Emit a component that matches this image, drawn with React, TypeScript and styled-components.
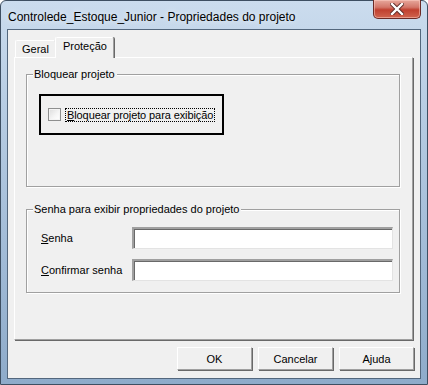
import React from "react";
import styled, { createGlobalStyle } from "styled-components";

const GlobalStyle = createGlobalStyle`
  html, body { margin: 0; padding: 0; background: #ffffff; }
  body { font-family: "Liberation Sans", Arial, sans-serif; }
`;

const Window = styled.div`
  width: 428px;
  height: 385px;
  box-sizing: border-box;
  border: 1px solid #3e4f62;
  border-radius: 6px 6px 0 0;
  background: linear-gradient(180deg, #cbdcee 0%, #b9cee4 25%, #9fb9d5 70%, #8eabca 100%);
  display: flex;
  flex-direction: column;
  padding: 0 6px 5px 6px;
`;

const TitleBar = styled.div`
  height: 28px;
  display: flex;
  align-items: flex-start;
  justify-content: space-between;
`;

const Title = styled.div`
  font-family: "Liberation Sans", Arial, sans-serif;
  font-size: 12px;
  color: #000;
  padding: 9px 0 0 1px;
  text-shadow: 0 0 6px rgba(255, 255, 255, 0.9);
`;

const CloseButton = styled.div`
  width: 48px;
  height: 19px;
  margin-right: 0;
  margin-top: -1px;
  box-sizing: border-box;
  border: 1px solid #6b2a26;
  border-top: none;
  border-radius: 0 0 5px 5px;
  background: linear-gradient(180deg, #e7a89c 0%, #d3776a 40%, #c0402f 55%, #d0644f 100%);
  box-shadow: inset 0 0 0 1px rgba(255, 210, 200, 0.5);
  display: flex;
  align-items: center;
  justify-content: center;
`;

const Client = styled.div`
  flex: 1;
  box-sizing: border-box;
  border: 1px solid #53677d;
  background: #f0f0f0;
  display: flex;
  flex-direction: column;
  padding: 7px 7px 0 6px;
`;

const TabRow = styled.div`
  display: flex;
  height: 20px;
  align-items: flex-end;
  position: relative;
  z-index: 1;
`;

const Tab = styled.div<{ $active?: boolean }>`
  box-sizing: border-box;
  height: ${(p) => (p.$active ? "21px" : "17px")};
  margin-bottom: ${(p) => (p.$active ? "-1px" : "0")};
  margin-left: ${(p) => (p.$active ? "-1px" : "1px")};
  padding: ${(p) => (p.$active ? "2px 6px 0 7px" : "2px 6px 0 6px")};
  background: #f0f0f0;
  border-top: 1px solid #ffffff;
  border-left: 1px solid #ffffff;
  border-right: 1px solid #a0a0a0;
  box-shadow: 1px 0 0 #696969;
  border-radius: 2px 2px 0 0;
  font-size: 11px;
  color: #000;
  line-height: 13px;
`;

const Panel = styled.div`
  height: 283px;
  box-sizing: border-box;
  border-top: 1px solid #ffffff;
  border-left: 1px solid #ffffff;
  border-right: 1px solid #a0a0a0;
  border-bottom: 1px solid #a0a0a0;
  box-shadow: 1px 1px 0 #696969;
  display: flex;
  flex-direction: column;
  padding: 16px 12px 0 11px;
`;

const Group = styled.div<{ $height: number; $gap?: number }>`
  position: relative;
  height: ${(p) => p.$height}px;
  margin-top: ${(p) => p.$gap ?? 0}px;
  box-sizing: border-box;
  border: 1px solid #a0a0a0;
  box-shadow: inset 1px 1px 0 #ffffff, 1px 1px 0 #ffffff;
`;

const Legend = styled.span`
  position: absolute;
  top: -7px;
  left: 6px;
  padding: 0 2px 0 1px;
  background: #f0f0f0;
  font-size: 11px;
  line-height: 13px;
  color: #000;
`;

const Highlight = styled.div`
  width: 185px;
  height: 41px;
  box-sizing: border-box;
  border: 2px solid #000;
  margin: 19px 0 0 12px;
  display: flex;
  align-items: center;
  padding-left: 7px;
  gap: 4px;
`;

const CheckBox = styled.span`
  width: 13px;
  height: 13px;
  box-sizing: border-box;
  border: 1px solid #8e8f8f;
  background: linear-gradient(135deg, #dcdcdc 0%, #f6f6f6 60%, #ffffff 100%);
  box-shadow: inset 0 0 0 1px #f4f4f4;
`;

const FocusLabel = styled.span`
  font-size: 11px;
  line-height: 12px;
  padding: 0 1px;
  border: 1px dotted #000;
  color: #000;
  letter-spacing: -0.1px;
`;

const Mnemonic = styled.span`
  text-decoration: underline;
  text-underline-offset: 1px;
`;

const FieldRow = styled.div<{ $top: number }>`
  display: flex;
  align-items: center;
  margin-left: 14px;
  margin-right: 6px;
  margin-top: ${(p) => p.$top}px;
`;

const FieldLabel = styled.label`
  width: 91px;
  font-size: 11px;
  color: #000;
`;

const TextBox = styled.div`
  flex: 1;
  height: 22px;
  box-sizing: border-box;
  background: #ffffff;
  border-top: 2px solid #a0a0a0;
  border-left: 2px solid #a0a0a0;
  border-right: 1px solid #e3e3e3;
  border-bottom: 1px solid #e3e3e3;
  box-shadow: inset 1px 1px 0 #696969;
`;

const ButtonRow = styled.div`
  display: flex;
  justify-content: flex-end;
  gap: 6px;
  margin-top: 7px;
  margin-right: -1px;
`;

const Button = styled.div`
  width: 75px;
  height: 23px;
  box-sizing: border-box;
  background: #f0f0f0;
  border-top: 1px solid #ffffff;
  border-left: 1px solid #ffffff;
  border-right: 1px solid #a0a0a0;
  border-bottom: 1px solid #a0a0a0;
  box-shadow: 1px 1px 0 #696969;
  display: flex;
  align-items: center;
  justify-content: center;
  font-size: 11px;
  color: #000;
`;

function CloseIcon() {
  return (
    <svg width="14" height="12" viewBox="0 0 14 12">
      <path
        d="M2 1 L12 11 M12 1 L2 11"
        stroke="#5a2a26"
        strokeWidth="4.2"
        strokeLinecap="square"
      />
      <path
        d="M2 1 L12 11 M12 1 L2 11"
        stroke="#ffffff"
        strokeWidth="2.4"
        strokeLinecap="square"
      />
    </svg>
  );
}

export default function App() {
  return (
    <>
      <GlobalStyle />
      <Window>
        <TitleBar>
          <Title>Controlede_Estoque_Junior - Propriedades do projeto</Title>
          <CloseButton>
            <CloseIcon />
          </CloseButton>
        </TitleBar>
        <Client>
          <TabRow>
            <Tab>Geral</Tab>
            <Tab $active>Proteção</Tab>
          </TabRow>
          <Panel>
            <Group $height={113}>
              <Legend>Bloquear projeto</Legend>
              <Highlight>
                <CheckBox />
                <FocusLabel>
                  <Mnemonic>B</Mnemonic>loquear projeto para exibição
                </FocusLabel>
              </Highlight>
            </Group>
            <Group $height={84} $gap={22}>
              <Legend>Senha para exibir propriedades do projeto</Legend>
              <FieldRow $top={17}>
                <FieldLabel>
                  <Mnemonic>S</Mnemonic>enha
                </FieldLabel>
                <TextBox />
              </FieldRow>
              <FieldRow $top={10}>
                <FieldLabel>
                  <Mnemonic>C</Mnemonic>onfirmar senha
                </FieldLabel>
                <TextBox />
              </FieldRow>
            </Group>
          </Panel>
          <ButtonRow>
            <Button>OK</Button>
            <Button>Cancelar</Button>
            <Button>Ajuda</Button>
          </ButtonRow>
        </Client>
      </Window>
    </>
  );
}
